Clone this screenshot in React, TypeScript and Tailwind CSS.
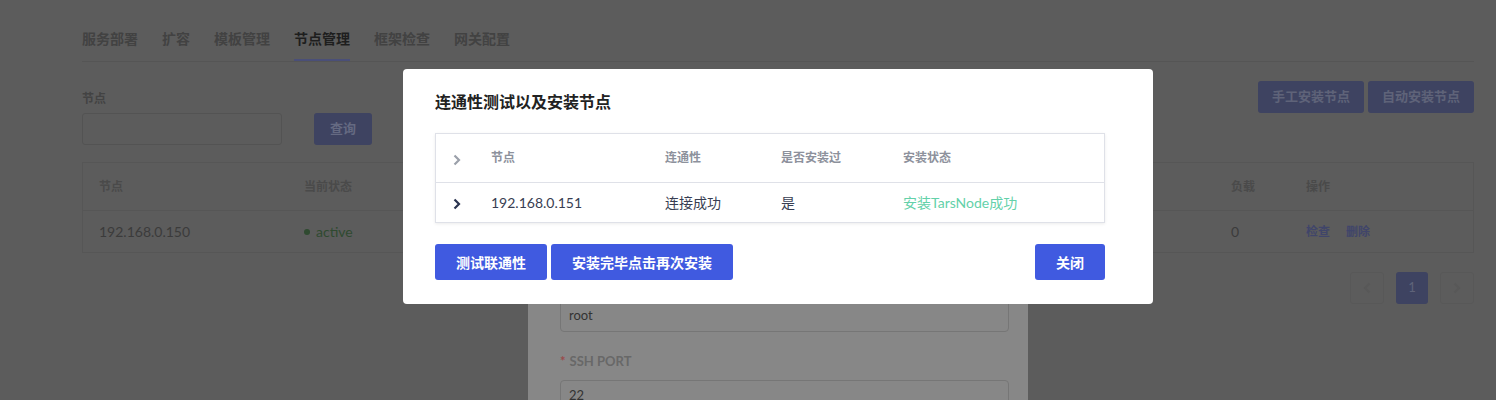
const font = "font-['Lato','Noto_Sans_CJK_SC',sans-serif]";

const tabs = ["服务部署", "扩容", "模板管理", "节点管理", "框架检查", "网关配置"];

function Chevron({ className }: { className?: string }) {
  return (
    <svg viewBox="0 0 8 12" width="8" height="12" fill="none" className={className}>
      <path d="M1.5 1.5 L6 6 L1.5 10.5" stroke="currentColor" strokeWidth="2.2" strokeLinejoin="miter" />
    </svg>
  );
}

function PageBehind() {
  return (
    <div className="pl-[82px] pr-[22px] pt-[28px]">
      {/* Tabs */}
      <div className="flex gap-[24px] border-b border-[#555555]">
        {tabs.map((t) => (
          <div
            key={t}
            className={
              t === "节点管理"
                ? "border-b-2 border-[#4a4f78] pb-[10px] text-[14px] font-bold text-[#1e1e1e]"
                : "pb-[10px] text-[14px] font-bold text-[#424242]"
            }
          >
            {t}
          </div>
        ))}
      </div>

      {/* Search + actions */}
      <div className="mt-[19px] flex items-start justify-between">
        <div className="pt-[10px]">
          <div className="text-[12px] font-bold leading-[16px] text-[#434343]">节点</div>
          <div className="mt-[6px] flex gap-[32px]">
            <div className="h-[32px] w-[200px] rounded-[3px] border border-[#535353]" />
            <div className="flex h-[32px] w-[58px] items-center justify-center rounded-[3px] bg-[#3e4361] text-[13px] font-bold text-[#656a82]">
              查询
            </div>
          </div>
        </div>
        <div className="flex gap-[4px]">
          <div className="flex h-[32px] w-[106px] items-center justify-center rounded-[3px] bg-[#3e4361] text-[13px] font-bold text-[#5f6379]">
            手工安装节点
          </div>
          <div className="flex h-[32px] w-[106px] items-center justify-center rounded-[3px] bg-[#3e4361] text-[13px] font-bold text-[#5f6379]">
            自动安装节点
          </div>
        </div>
      </div>

      {/* Table */}
      <div className="mt-[17px] border border-[#565656]">
        <div className="flex h-[48px] items-center border-b border-[#565656] text-[12px] font-bold text-[#4a4a4a]">
          <div className="w-[221px] pl-[16px]">节点</div>
          <div className="flex-1">当前状态</div>
          <div className="w-[75px]">负载</div>
          <div className="w-[167px]">操作</div>
        </div>
        <div className="flex h-[41px] items-center text-[14px] text-[#3b3b3b]">
          <div className="w-[221px] pl-[16px]">192.168.0.150</div>
          <div className="flex flex-1 items-center gap-[6px] text-[#2f4a30]">
            <span className="h-[6px] w-[6px] rounded-full bg-[#2f4a30]" />
            active
          </div>
          <div className="w-[75px]">0</div>
          <div className="flex w-[167px] gap-[16px] text-[12px] font-bold text-[#40456a]">
            <span>检查</span>
            <span>删除</span>
          </div>
        </div>
      </div>

      {/* Pagination */}
      <div className="mt-[19px] flex justify-end gap-[12px]">
        <div className="flex h-[32px] w-[34px] items-center justify-center rounded-[3px] border border-[#585858] text-[#585858]">
          <Chevron className="rotate-180" />
        </div>
        <div className="flex h-[32px] w-[32px] items-center justify-center rounded-[3px] bg-[#3e4361] text-[13px] text-[#5f6379]">
          1
        </div>
        <div className="flex h-[32px] w-[34px] items-center justify-center rounded-[3px] border border-[#585858] text-[#585858]">
          <Chevron />
        </div>
      </div>
    </div>
  );
}

function FormModal() {
  return (
    <div className="absolute left-[528px] top-[80px] h-[400px] w-[500px] bg-[#878787] pl-[32px] pr-[19px] pt-[220px]">
      <div className="flex h-[32px] items-center rounded-[4px] border border-[#767676] px-[8px] text-[13px] text-[#333333]">
        root
      </div>
      <div className="mt-[20px] text-[13px] font-bold leading-[18px] text-[#686868]">
        <span className="mr-[4px] text-[#9a4b4b]">*</span>SSH PORT
      </div>
      <div className="mt-[10px] flex h-[32px] items-center rounded-[4px] border border-[#767676] px-[8px] text-[13px] text-[#333333]">
        22
      </div>
    </div>
  );
}

function InstallDialog() {
  return (
    <div className="absolute left-[403px] top-[69px] w-[750px] rounded-[4px] bg-white pb-[24px] pl-[32px] pr-[48px] pt-[22px]">
      <h2 className="text-[16px] font-bold leading-[22px] text-[#222222]">连通性测试以及安装节点</h2>

      <div className="mt-[20px] border border-[#dfe1e8] shadow-[0_1px_3px_rgba(0,0,0,0.08)]">
        <div className="flex h-[49px] items-center border-b border-[#dfe1e8] text-[12px] font-bold text-[#8d919c]">
          <div className="w-[55px] pl-[17px] pt-[3px] text-[#9ba0aa]">
            <Chevron />
          </div>
          <div className="w-[174px]">节点</div>
          <div className="w-[116px]">连通性</div>
          <div className="w-[122px]">是否安装过</div>
          <div className="flex-1">安装状态</div>
        </div>
        <div className="flex h-[39px] items-center text-[14px] text-[#383e52]">
          <div className="w-[55px] pl-[17px] pt-[2px] text-[#2b3450]">
            <Chevron />
          </div>
          <div className="w-[174px]">192.168.0.151</div>
          <div className="w-[116px]">连接成功</div>
          <div className="w-[122px]">是</div>
          <div className="flex-1 text-[#63d1a9]">安装TarsNode成功</div>
        </div>
      </div>

      <div className="mt-[21px] flex items-center">
        <button className="h-[36px] w-[112px] rounded-[3px] bg-[#405ae0] text-[14px] font-bold text-white">
          测试联通性
        </button>
        <button className="ml-[4px] h-[36px] w-[182px] rounded-[3px] bg-[#405ae0] text-[14px] font-bold text-white">
          安装完毕点击再次安装
        </button>
        <button className="ml-auto h-[36px] w-[70px] rounded-[3px] bg-[#405ae0] text-[14px] font-bold text-white">
          关闭
        </button>
      </div>
    </div>
  );
}

export default function App() {
  return (
    <div className={`relative h-[400px] w-full overflow-hidden bg-[#5c5c5c] ${font}`}>
      <PageBehind />
      <FormModal />
      <InstallDialog />
    </div>
  );
}
